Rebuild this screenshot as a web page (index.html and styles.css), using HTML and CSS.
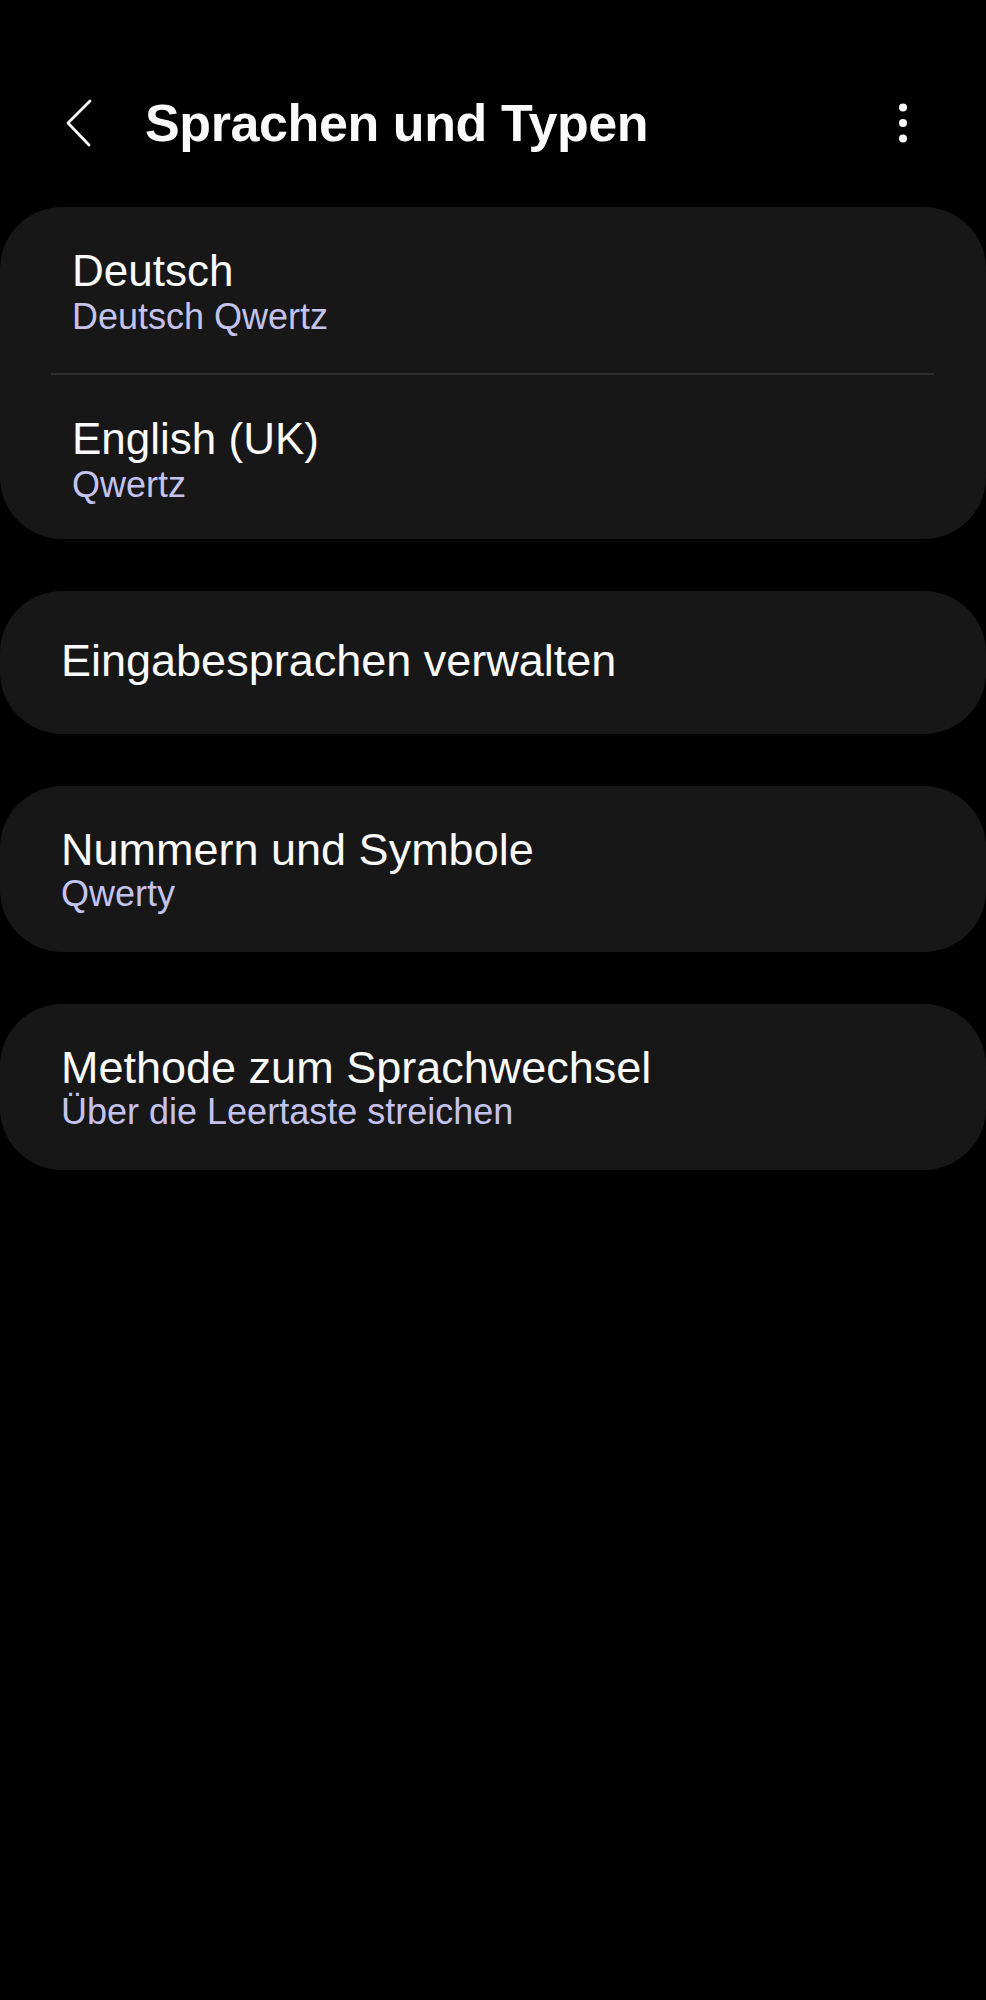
FILE: index.html
```html
<!DOCTYPE html>
<html lang="de">
<head>
    <meta charset="UTF-8">
    <meta name="viewport" content="width=device-width, initial-scale=1.0">
    <title>Sprachen und Typen</title>
    <link rel="stylesheet" href="styles.css">
</head>

<body>

    <header class="topbar">
        <svg class="back" width="26" height="48" viewBox="0 0 26 48">
            <path d="M24 2 L2 24 L23 46" fill="none" stroke="#fafafa" stroke-width="2.8" stroke-linecap="round" stroke-linejoin="round"/>
        </svg>
        <h1>Sprachen und Typen</h1>
        <svg class="more" width="24" height="48" viewBox="0 0 24 48">
            <circle cx="12" cy="8.5" r="4" fill="#fafafa"/>
            <circle cx="12" cy="24" r="4" fill="#fafafa"/>
            <circle cx="12" cy="39.5" r="4" fill="#fafafa"/>
        </svg>
    </header>

    <div class="card languages">
        <div class="row">
            <div class="title">Deutsch</div>
            <div class="sub">Deutsch Qwertz</div>
        </div>
        <div class="divider"></div>
        <div class="row last">
            <div class="title">English (UK)</div>
            <div class="sub">Qwertz</div>
        </div>
    </div>

    <div class="card single">
        <div class="title">Eingabesprachen verwalten</div>
    </div>

    <div class="card">
        <div class="title">Nummern und Symbole</div>
        <div class="sub">Qwerty</div>
    </div>

    <div class="card">
        <div class="title">Methode zum Sprachwechsel</div>
        <div class="sub">Über die Leertaste streichen</div>
    </div>

</body>
</html>
```

FILE: styles.css
```css
/* Seite */
html {
    background: #000;
}

body {
    margin: 0;
    padding: 0;
    font-family: "Liberation Sans", Arial, sans-serif;
    color: #fafafa;
    background: #000;
}

/* Kopfzeile */
.topbar {
    display: flex;
    align-items: center;
    height: 126px;
    padding: 60px 0 21px;
}

    .topbar .back {
        margin-left: 66px;
        flex-shrink: 0;
    }

    .topbar h1 {
        margin: 0 0 0 53px;
        font-size: 52px;
        line-height: 60px;
        font-weight: bold;
        letter-spacing: -0.4px;
    }

    .topbar .more {
        margin-left: auto;
        margin-right: 71px;
        flex-shrink: 0;
    }

/* Karten */
.card {
    background: #171717;
    border-radius: 62px;
    padding: 39px 0 39px 61px;
    margin-bottom: 52px;
}

    .card.single {
        padding: 45px 0 48px 61px;
    }

    .card.languages {
        padding: 0;
    }

.title {
    font-size: 45px;
    line-height: 50px;
}

.sub {
    font-size: 36px;
    line-height: 38px;
    color: #c4c3f0;
}

.languages .row {
    padding: 38px 0 36px 72px;
}

    .languages .row.last {
        padding-bottom: 34px;
        padding-top: 38px;
    }

    .languages .row .title {
        font-size: 44px;
        line-height: 52px;
    }

    .languages .row .sub {
        line-height: 40px;
    }

.divider {
    height: 2px;
    margin: 0 52px 0 51px;
    background: #2f2f2f;
}
```
